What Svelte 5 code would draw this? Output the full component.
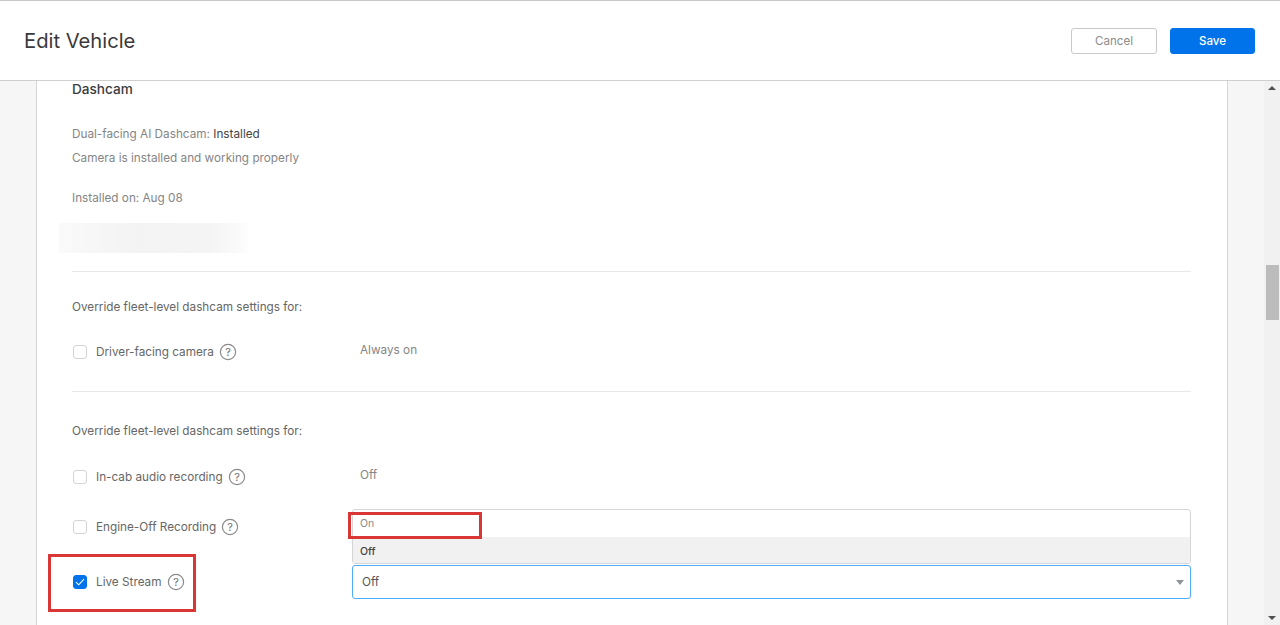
<script lang="ts">
  const audioRows = [{ label: "In-cab audio recording", value: "Off" }];
</script>

{#snippet help()}
  <svg class="help" width="18" height="18" viewBox="0 0 18 18" aria-hidden="true">
    <circle cx="9" cy="9" r="7.6" fill="none" stroke="#8a8a8a" stroke-width="1.2" />
    <text x="9" y="12.6" text-anchor="middle">?</text>
  </svg>
{/snippet}

<div class="page">
  <header class="topbar">
    <h1>Edit Vehicle</h1>
    <div class="actions">
      <button class="btn cancel">Cancel</button>
      <button class="btn save">Save</button>
    </div>
  </header>

  <div class="body">
    <main class="content">
      <section class="card">
        <h2>Dashcam</h2>
        <p class="status">Dual-facing AI Dashcam: <b>Installed</b></p>
        <p class="working">Camera is installed and working properly</p>
        <p class="installed">Installed on: Aug 08</p>
        <div class="redacted"></div>

        <hr class="first" />

        <p class="override">Override fleet-level dashcam settings for:</p>
        <div class="row driver">
          <label class="check"><span class="box"></span>Driver-facing camera{@render help()}</label>
          <span class="value">Always on</span>
        </div>

        <hr class="second" />

        <p class="override">Override fleet-level dashcam settings for:</p>
        {#each audioRows as r}
          <div class="row audio">
            <label class="check"><span class="box"></span>{r.label}{@render help()}</label>
            <span class="value">{r.value}</span>
          </div>
        {/each}
        <div class="row engine">
          <label class="check"><span class="box"></span>Engine-Off Recording{@render help()}</label>
        </div>
        <div class="row live">
          <label class="check">
            <span class="box on">
              <svg width="10" height="8" viewBox="0 0 10 8" aria-hidden="true">
                <path d="M1 4.2 3.7 6.8 9 1.2" fill="none" stroke="#fff" stroke-width="1.1" />
              </svg>
            </span>
            Live Stream{@render help()}
            <span class="mark mark-live"></span>
          </label>
          <div class="select-wrap">
            <ul class="menu">
              <li class="opt">On<span class="mark mark-on"></span></li>
              <li class="opt active">Off</li>
            </ul>
            <div class="select">
              <span>Off</span>
              <i class="caret"></i>
            </div>
          </div>
        </div>
      </section>
    </main>

    <div class="scrollbar">
      <span class="arrow up"></span>
      <span class="thumb"></span>
      <span class="arrow down"></span>
    </div>
  </div>
</div>

<style>
  :global(body) {
    margin: 0;
    font-family: Inter, "Liberation Sans", sans-serif;
  }
  * {
    box-sizing: border-box;
  }
  .page {
    height: 625px;
    display: flex;
    flex-direction: column;
    overflow: hidden;
    background: #fff;
    border-top: 1px solid #c8c8c8;
  }
  .topbar {
    height: 80px;
    flex: none;
    display: flex;
    align-items: center;
    justify-content: space-between;
    padding: 0 25px 0 24px;
    border-bottom: 1px solid #cfcfcf;
  }
  h1 {
    margin: 0;
    font-size: 20.2px;
    font-weight: 400;
    color: #3a3a3a;
  }
  .actions {
    display: flex;
    gap: 13px;
  }
  .btn {
    width: 86px;
    height: 26px;
    padding: 0;
    font: inherit;
    font-size: 11.6px;
    border-radius: 3px;
  }
  .cancel {
    background: #fff;
    color: #8c8c8c;
    border: 1px solid #c9c9c9;
  }
  .save {
    width: 85px;
    background: #0073ea;
    color: #fff;
    border: 1px solid #0073ea;
    font-weight: 500;
  }
  .body {
    flex: 1;
    min-height: 0;
    display: flex;
    background: #f6f6f6;
  }
  .content {
    flex: 1;
    min-width: 0;
    padding: 0 36px;
    overflow: hidden;
  }
  .card {
    height: 100%;
    background: #fff;
    border-left: 1px solid #d6d6d6;
    border-right: 1px solid #d6d6d6;
    padding: 0 36px 0 35px;
    font-size: 11.75px;
    color: #858585;
  }
  h2 {
    margin: 0;
    height: 17px;
    line-height: 16px;
    font-size: 13.6px;
    font-weight: 500;
    color: #3c3c3c;
  }
  p {
    margin: 0;
    line-height: 16px;
  }
  .status {
    margin-top: 28px;
  }
  .status b {
    font-weight: 400;
    color: #444;
  }
  .working {
    margin-top: 8px;
  }
  .installed {
    margin-top: 24px;
  }
  .redacted {
    height: 30px;
    width: 189px;
    margin: 17px 0 0 -13px;
    background: linear-gradient(90deg, #fafafa, #f3f3f3 40%, #f4f4f4 80%, #fdfdfd);
  }
  hr {
    border: 0;
    border-top: 1px solid #e8e8e8;
    margin: 0;
  }
  hr.first {
    margin-top: 18px;
  }
  hr.second {
    margin-top: 30px;
  }
  .override {
    margin-top: 27px;
    color: #666;
  }
  hr.second + .override {
    margin-top: 31px;
  }
  .row {
    display: grid;
    grid-template-columns: 280px 1fr;
    align-items: center;
  }
  .row.driver {
    margin-top: 28px;
    height: 18px;
  }
  .row.audio {
    margin-top: 29px;
    height: 18px;
  }
  .row.engine {
    margin-top: 32px;
    height: 18px;
  }
  .row.live {
    margin-top: 29px;
    height: 34px;
  }
  .check {
    position: relative;
    display: flex;
    align-items: center;
    color: #666;
  }
  .box {
    width: 14px;
    height: 14px;
    flex: none;
    display: flex;
    align-items: center;
    justify-content: center;
    margin: 0 9px 0 1px;
    border: 1px solid #d4d4d4;
    border-radius: 3px;
    background: #fff;
  }
  .box.on {
    background: #0073ea;
    border-color: #0073ea;
  }
  .help {
    margin-left: 5px;
    flex: none;
  }
  .help text {
    font-size: 11px;
    fill: #707070;
  }
  .value {
    padding-left: 8px;
    position: relative;
    top: -2px;
  }
  .select-wrap {
    position: relative;
  }
  .select {
    height: 34px;
    display: flex;
    align-items: center;
    justify-content: space-between;
    padding: 0 6px 0 9px;
    border: 1px solid #4dabf7;
    border-radius: 3px;
    background: #fff;
    color: #555;
  }
  .caret {
    width: 0;
    height: 0;
    border: 4px solid transparent;
    border-top: 5px solid #8f949c;
    border-bottom: 0;
  }
  .menu {
    position: absolute;
    left: 0;
    right: 0;
    bottom: 35px;
    margin: 0;
    padding: 0;
    list-style: none;
    background: #fff;
    border: 1px solid #d6d6d6;
    border-radius: 3px;
    font-size: 10.5px;
  }
  .opt {
    position: relative;
    height: 27px;
    line-height: 27px;
    padding-left: 7px;
    color: #8a8a8a;
  }
  .opt.active {
    background: #f1f1f1;
    color: #444;
    font-weight: 500;
    height: 26px;
    line-height: 29px;
  }
  .mark {
    position: absolute;
    z-index: 2;
    border: 3px solid #d93636;
    pointer-events: none;
  }
  .mark-live {
    left: -24px;
    top: -19px;
    width: 148px;
    height: 58px;
  }
  .mark-on {
    left: -5px;
    top: 2px;
    width: 134px;
    height: 27px;
  }
  .scrollbar {
    width: 16px;
    flex: none;
    display: flex;
    flex-direction: column;
    align-items: center;
    background: #f1f1f1;
    position: relative;
  }
  .arrow {
    width: 0;
    height: 0;
    border: 4px solid transparent;
  }
  .arrow.up {
    margin-top: 5px;
    border-top: 0;
    border-bottom: 4px solid #505050;
  }
  .thumb {
    width: 13px;
    height: 55px;
    margin-top: 175px;
    background: #bcbcbc;
  }
  .arrow.down {
    margin-top: auto;
    margin-bottom: 5px;
    border-bottom: 0;
    border-top: 4px solid #505050;
  }
</style>
